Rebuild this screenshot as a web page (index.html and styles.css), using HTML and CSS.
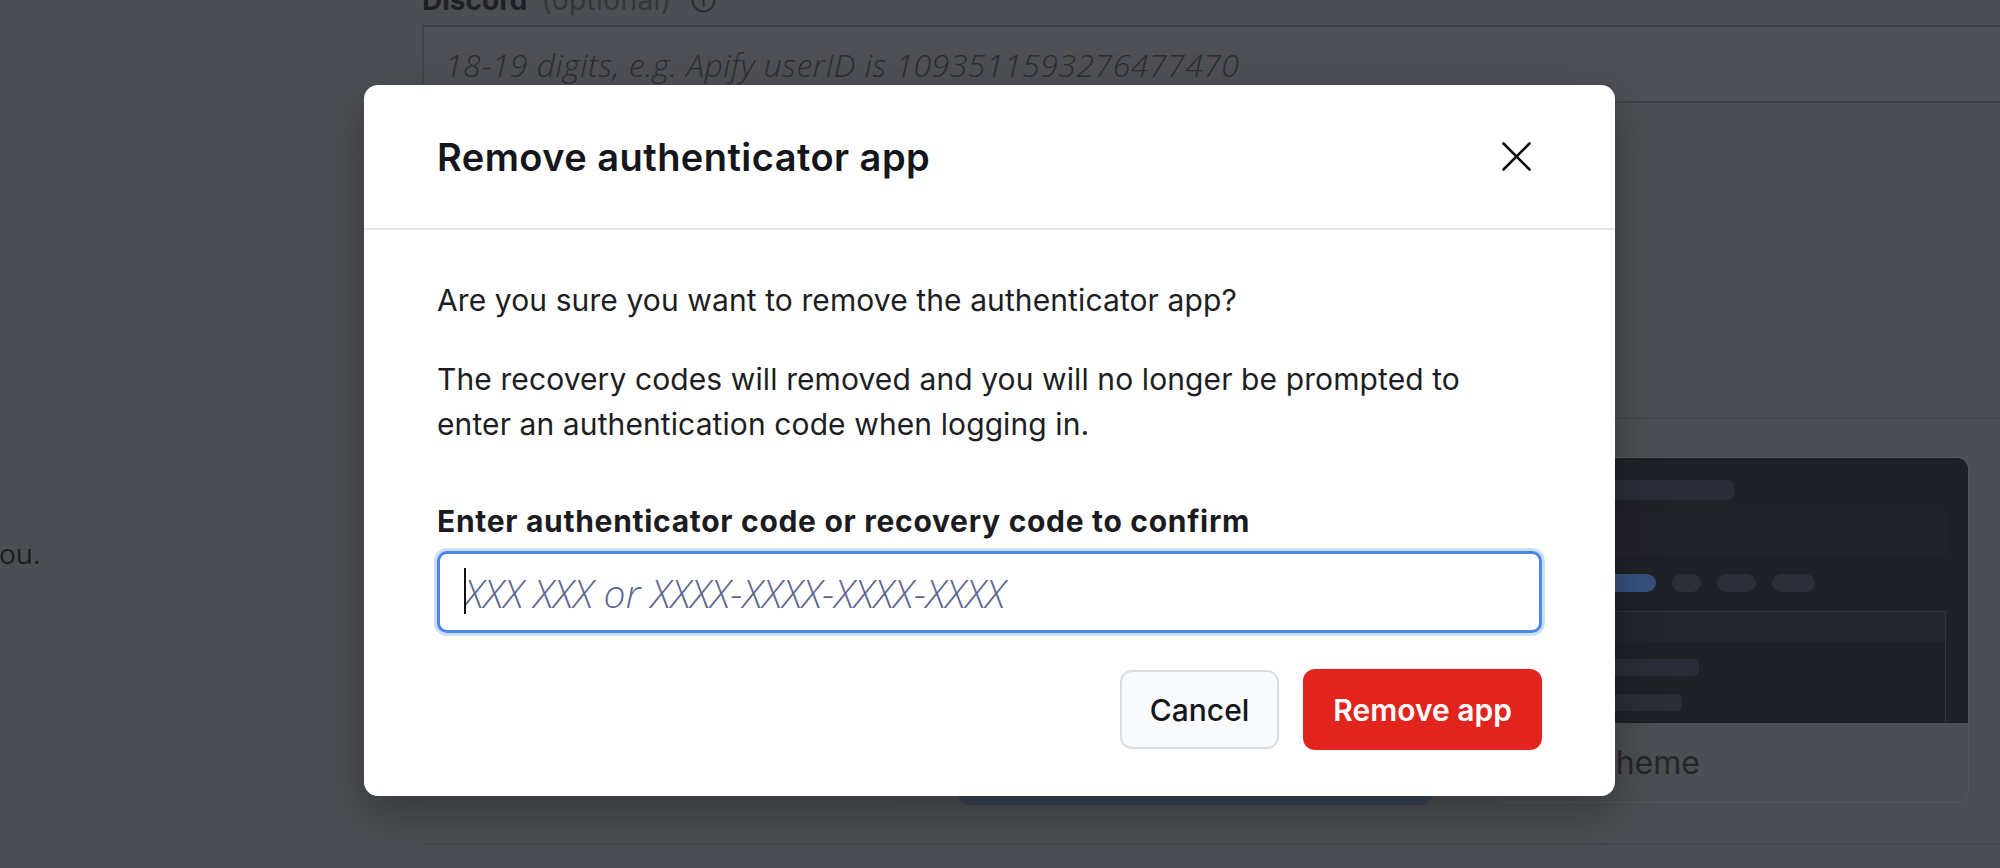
FILE: index.html
```html
<!DOCTYPE html>
<html lang="en">
<head>
<meta charset="utf-8">
<title>Remove authenticator app</title>
<link rel="stylesheet" href="styles.css">
</head>
<body>
<div class="page">
  <aside class="side">
    <p class="side-desc">you.</p>
  </aside>
  <main class="content">
    <section class="field">
      <div class="field-label">
        <strong>Discord</strong>
        <span class="opt">(optional)</span>
        <svg class="info" width="25" height="25" viewBox="0 0 24 24" fill="none" stroke="currentColor" stroke-width="2"><circle cx="12" cy="12" r="10.5"/><path d="M12 11v6M12 7.5v.5" stroke-linecap="round"/></svg>
      </div>
      <div class="field-input">18-19 digits, e.g. Apify userID is 1093511593276477470</div>
    </section>
    <div class="rule rule-top"></div>
    <section class="themes">
      <div class="theme-card system">
        <div class="preview"></div>
        <div class="theme-name">System theme</div>
      </div>
      <div class="theme-card light selected">
        <div class="preview"></div>
        <div class="theme-name">Light theme</div>
      </div>
      <div class="theme-card dark">
        <div class="preview">
          <div class="pv-bar"></div>
          <div class="pv-stripe"></div>
          <div class="pv-pills">
            <span class="pill pill-active"></span>
            <span class="pill p1"></span>
            <span class="pill p2"></span>
            <span class="pill p3"></span>
          </div>
          <div class="pv-box">
            <div class="pv-box-head"></div>
            <div class="pv-line l1"></div>
            <div class="pv-line l2"></div>
          </div>
        </div>
        <div class="theme-name">Dark theme</div>
      </div>
    </section>
    <div class="rule rule-bottom"></div>
  </main>
</div>

<div class="modal" role="dialog" aria-labelledby="modal-title">
  <header class="modal-header">
    <h2 id="modal-title" class="modal-title">Remove authenticator app</h2>
    <button class="close-btn" type="button" aria-label="Close">
      <svg width="29" height="29" viewBox="0 0 29 29" fill="none" stroke="#111" stroke-width="2.6" stroke-linecap="round"><path d="M1.5 1.5L27.5 27.5M27.5 1.5L1.5 27.5"/></svg>
    </button>
  </header>
  <div class="modal-body">
    <p class="msg msg-first">Are you sure you want to remove the authenticator app?</p>
    <p class="msg msg-second">The recovery codes will removed and you will no longer be prompted to enter an authentication code when logging in.</p>
    <label class="code-label" for="code">Enter authenticator code or recovery code to confirm</label>
    <div class="code-wrap">
      <input id="code" class="code-input" type="text" placeholder="XXX XXX or XXXX-XXXX-XXXX-XXXX">
      <span class="caret"></span>
    </div>
    <div class="actions">
      <button class="btn btn-cancel" type="button">Cancel</button>
      <button class="btn btn-danger" type="button">Remove app</button>
    </div>
  </div>
</div>
</body>
</html>
```
FILE: styles.css
```css
* { box-sizing: border-box; }

body {
  margin: 0;
  width: 2000px;
  height: 868px;
  overflow: hidden;
  position: relative;
  background: #4b4e52;
  font-family: Inter, "Noto Sans", sans-serif;
}

/* ---------- dimmed page behind the dialog ---------- */
.page {
  display: grid;
  grid-template-columns: 422px 1fr;
  height: 868px;
}

.side { padding-top: 533px; }

.side-desc {
  margin: 0 0 0 -15px;
  font-family: "Open Sans", sans-serif;
  font-size: 28px;
  line-height: 40px;
  color: #1b1d22;
}

.content { min-width: 0; }

.field-label {
  margin-top: -19px;
  display: flex;
  align-items: center;
  gap: 14px;
  font-size: 28px;
  line-height: 38px;
  color: #1e2025;
}
.field-label .opt { color: #33363b; font-weight: 400; letter-spacing: 0.4px; }
.field-label .info { color: #2c2f34; margin-left: 6px; }

.field-input {
  margin-top: 6px;
  height: 78px;
  margin-right: -20px;
  padding: 0 21px;
  display: flex;
  align-items: center;
  border: 2px solid #404247;
  border-right: none;
  background: #4e5055;
  font-family: "Open Sans", sans-serif;
  font-style: italic;
  font-weight: 300;
  font-size: 32px;
  letter-spacing: 0.5px;
  color: #2b2d32;
}

.rule { height: 2px; background: #45474c; }
.rule-top { margin-top: 314px; }
.rule-bottom { margin-top: 38px; }

.themes {
  margin-top: 38px;
  display: grid;
  grid-template-columns: repeat(3, 475px);
  column-gap: 61px;
}

.theme-card {
  height: 346px;
  border: 1px solid #4e5156;
  border-radius: 12px;
  overflow: hidden;
  display: flex;
  flex-direction: column;
}
.theme-card .preview { height: 265px; }
.theme-name {
  flex: 1;
  display: flex;
  align-items: center;
  padding-left: 30px;
  font-size: 32px;
  color: #24262b;
}

.theme-card.selected {
  border: 2px solid #3b4152;
  height: 348px;
}
.theme-card.selected .theme-name { background: #3b4152; }

.theme-card.dark { border-color: #55575c; }
.theme-card.dark .preview {
  background: #1f2127;
  padding: 22px 22px 0 24px;
  display: flex;
  flex-direction: column;
}

.pv-bar { width: 215px; height: 20px; border-radius: 6px; background: #2a2d37; }
.pv-stripe { margin-top: 10px; height: 47px; background: #222329; }
.pv-pills { margin-top: 17px; display: flex; gap: 16px; }
.pill { height: 18px; border-radius: 9px; background: #2c2f38; }
.pill-active { width: 137px; background: #36507e; }
.p1 { width: 29px; }
.p2 { width: 39px; }
.p3 { width: 43px; }

.pv-box {
  margin-top: 19px;
  flex: 1;
  border: 1px solid #33353c;
  border-bottom: none;
}
.pv-box-head { height: 29px; background: #24262d; }
.pv-line { height: 17px; border-radius: 5px; background: #2a2d37; }
.pv-line.l1 { width: 179px; margin-top: 18px; }
.pv-line.l2 { width: 162px; margin-top: 18px; }

/* ---------- dialog ---------- */
.modal {
  position: absolute;
  left: 364px;
  top: 85px;
  width: 1251px;
  background: #fff;
  border-radius: 14px;
  box-shadow: 0 18px 48px rgba(0, 0, 0, 0.28);
  overflow: hidden;
}

.modal-header {
  height: 145px;
  padding: 0 73px;
  display: flex;
  align-items: center;
  justify-content: space-between;
  border-bottom: 2px solid #e4e6ea;
}

.modal-title {
  margin: 0;
  font-size: 38px;
  font-weight: 600;
  letter-spacing: 0.45px;
  color: #14161b;
}

.close-btn {
  width: 52px;
  height: 52px;
  padding: 0;
  border: none;
  background: none;
  display: flex;
  align-items: center;
  justify-content: center;
}

.modal-body { padding: 48px 73px 46px; }

.msg {
  margin: 0;
  max-width: 1060px;
  font-size: 30px;
  line-height: 45px;
  letter-spacing: 0.1px;
  color: #1c1e23;
}
.msg-first { margin-bottom: 34px; }
.msg-second { margin-bottom: 53px; }

.code-label {
  display: block;
  font-size: 30px;
  line-height: 42px;
  font-weight: 700;
  letter-spacing: 0.7px;
  color: #1a1c21;
  margin-bottom: 9px;
}

.code-wrap { position: relative; }

.code-input {
  display: block;
  width: 100%;
  height: 82px;
  padding: 0 24px;
  border: 3px solid #4a88e8;
  border-radius: 10px;
  box-shadow: 0 0 0 3px rgba(74, 136, 232, 0.28);
  outline: none;
  font-family: "Open Sans", sans-serif;
  font-size: 39px;
  font-style: italic;
  font-weight: 300;
  letter-spacing: 0.2px;
  color: #1c1e23;
}
.code-input::placeholder { color: #5d6590; opacity: 1; }

.caret {
  position: absolute;
  left: 27px;
  top: 17px;
  width: 2px;
  height: 46px;
  background: #111;
}

.actions {
  margin-top: 36px;
  display: flex;
  justify-content: flex-end;
  align-items: center;
  gap: 24px;
}

.btn {
  font-family: Inter, "Noto Sans", sans-serif;
  font-size: 30px;
  border-radius: 12px;
  cursor: pointer;
}

.btn-cancel {
  height: 79px;
  padding: 0 28px;
  border: 2px solid #d9dde4;
  background: #f9fafc;
  color: #14161b;
  font-weight: 500;
}

.btn-danger {
  height: 81px;
  padding: 0 30px;
  border: none;
  background: #e2241f;
  color: #fff;
  font-weight: 600;
}
```
